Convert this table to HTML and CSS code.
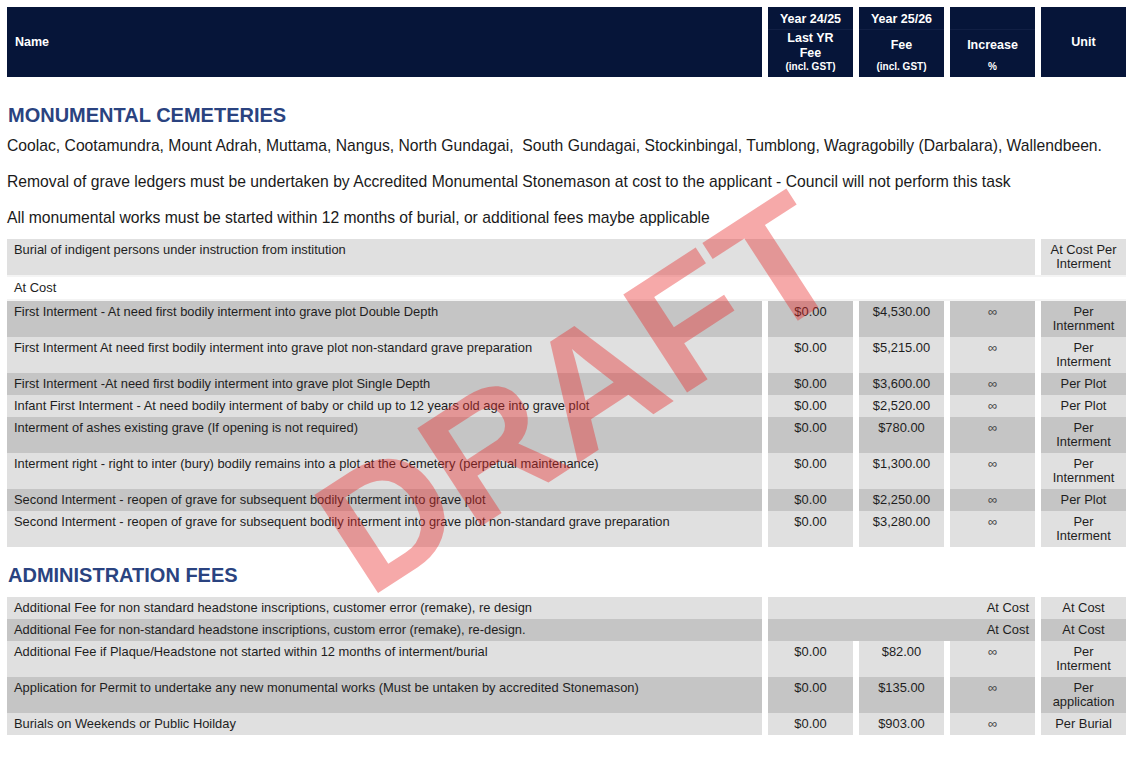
FILE: index.html
```html
<!DOCTYPE html>
<html>
<head>
<meta charset="utf-8">
<link rel="stylesheet" href="styles.css">
</head>
<body>
<div class="page">
  <table class="fees head">
    <colgroup><col class="c-name"><col class="c-num"><col class="c-num"><col class="c-num"><col class="c-num"></colgroup>
    <tr class="h-top">
      <th rowspan="2" class="h-name">Name</th>
      <th class="h-year">Year 24/25</th>
      <th class="h-year">Year 25/26</th>
      <th class="h-year"></th>
      <th rowspan="2" class="h-unit">Unit</th>
    </tr>
    <tr class="h-bot">
      <th><div class="h-cell"><div class="h-label">Last YR<br>Fee</div><div class="h-small">(incl. GST)</div></div></th>
      <th><div class="h-cell"><div class="h-label">Fee</div><div class="h-small">(incl. GST)</div></div></th>
      <th><div class="h-cell"><div class="h-label">Increase</div><div class="h-small">%</div></div></th>
    </tr>
  </table>

  <h2 class="section first">MONUMENTAL CEMETERIES</h2>
  <div class="notes">
    <p>Coolac, Cootamundra, Mount Adrah, Muttama, Nangus, North Gundagai, &nbsp;South Gundagai, Stockinbingal, Tumblong, Wagragobilly (Darbalara), Wallendbeen.</p>
    <p>Removal of grave ledgers must be undertaken by Accredited Monumental Stonemason at cost to the applicant - Council will not perform this task</p>
    <p>All monumental works must be started within 12 months of burial, or additional fees maybe applicable</p>
  </div>

  <table class="fees body">
    <colgroup><col class="c-name"><col class="c-num"><col class="c-num"><col class="c-num"><col class="c-num"></colgroup>
    <tr class="lt"><td colspan="4" class="name">Burial of indigent persons under instruction from institution</td><td class="unit">At Cost Per Interment</td></tr>
    <tr class="plain"><td colspan="5" class="name">At Cost</td></tr>
    <tr class="dk"><td class="name">First Interment - At need first bodily interment into grave plot Double Depth</td><td>$0.00</td><td>$4,530.00</td><td class="inf">∞</td><td class="unit">Per Internment</td></tr>
    <tr class="lt"><td class="name">First Interment At need first bodily interment into grave plot non-standard grave preparation</td><td>$0.00</td><td>$5,215.00</td><td class="inf">∞</td><td class="unit">Per Interment</td></tr>
    <tr class="dk"><td class="name">First Interment -At need first bodily interment into grave plot Single Depth</td><td>$0.00</td><td>$3,600.00</td><td class="inf">∞</td><td class="unit">Per Plot</td></tr>
    <tr class="lt"><td class="name">Infant First Interment - At need bodily interment of baby or child up to 12 years old age into grave plot</td><td>$0.00</td><td>$2,520.00</td><td class="inf">∞</td><td class="unit">Per Plot</td></tr>
    <tr class="dk"><td class="name">Interment of ashes existing grave (If opening is not required)</td><td>$0.00</td><td>$780.00</td><td class="inf">∞</td><td class="unit">Per Interment</td></tr>
    <tr class="lt"><td class="name">Interment right - right to inter (bury) bodily remains into a plot at the Cemetery (perpetual maintenance)</td><td>$0.00</td><td>$1,300.00</td><td class="inf">∞</td><td class="unit">Per Internment</td></tr>
    <tr class="dk"><td class="name">Second Interment - reopen of grave for subsequent bodily interment into grave plot</td><td>$0.00</td><td>$2,250.00</td><td class="inf">∞</td><td class="unit">Per Plot</td></tr>
    <tr class="lt"><td class="name">Second Interment - reopen of grave for subsequent bodily interment into grave plot non-standard grave preparation</td><td>$0.00</td><td>$3,280.00</td><td class="inf">∞</td><td class="unit">Per Interment</td></tr>
  </table>

  <h2 class="section">ADMINISTRATION FEES</h2>

  <table class="fees body">
    <colgroup><col class="c-name"><col class="c-num"><col class="c-num"><col class="c-num"><col class="c-num"></colgroup>
    <tr class="lt"><td class="name">Additional Fee for non standard headstone inscriptions, customer error (remake), re design</td><td colspan="3" class="right">At Cost</td><td class="unit">At Cost</td></tr>
    <tr class="dk"><td class="name">Additional Fee for non-standard headstone inscriptions, custom error (remake), re-design.</td><td colspan="3" class="right">At Cost</td><td class="unit">At Cost</td></tr>
    <tr class="lt"><td class="name">Additional Fee if Plaque/Headstone not started within 12 months of interment/burial</td><td>$0.00</td><td>$82.00</td><td class="inf">∞</td><td class="unit">Per Interment</td></tr>
    <tr class="dk"><td class="name">Application for Permit to undertake any new monumental works (Must be untaken by accredited Stonemason)</td><td>$0.00</td><td>$135.00</td><td class="inf">∞</td><td class="unit">Per application</td></tr>
    <tr class="lt"><td class="name">Burials on Weekends or Public Hoilday</td><td>$0.00</td><td>$903.00</td><td class="inf">∞</td><td class="unit">Per Burial</td></tr>
  </table>

  <div class="watermark">DRAFT</div>
</div>
</body>
</html>
```

FILE: styles.css
```css
* { box-sizing: border-box; }
html, body { margin: 0; padding: 0; background: #fff; }
body {
  font-family: "Liberation Sans", Arial, sans-serif;
  color: #1c1c1c;
}
.page {
  position: relative;
  padding: 7px 8px 0 7px;
  width: 1134px;
  height: 782px;
  overflow: hidden;
}
.fees {
  table-layout: fixed;
  border-collapse: separate;
  border-spacing: 6px 0;
  margin: 0 -6px;
  width: calc(100% + 12px);
}
.c-num { width: 85px; }

/* header */
.head th {
  background: #061539;
  color: #fff;
  font-weight: bold;
  font-size: 12.5px;
  padding: 0;
}
.h-top th { height: 22px; }
.h-bot th { height: 48px; border-top: 1px solid #111f44; }
.h-top .h-year { vertical-align: middle; line-height: 14px; padding-top: 1px; }
.h-name { text-align: left; padding-left: 8px !important; vertical-align: middle; }
.h-unit { text-align: center; vertical-align: middle; }
.h-cell {
  height: 47px;
  display: flex;
  flex-direction: column;
  align-items: center;
}
.h-label {
  flex: 1;
  display: flex;
  align-items: center;
  justify-content: center;
  line-height: 15px;
}
.h-small {
  font-size: 10px;
  line-height: 12px;
  padding-bottom: 4px;
}

/* sections */
.section {
  margin: 26px 0 10px 1px;
  font-size: 20px;
  line-height: 24px;
  font-weight: bold;
  color: #2a4380;
}
.notes {
  display: flex;
  flex-direction: column;
  gap: 18px;
  margin-bottom: 12px;
}
.notes p {
  margin: 0;
  font-size: 15.7px;
  line-height: 18px;
  color: #1a1a1a;
}

/* body table */
.body td {
  font-size: 12.9px;
  line-height: 14px;
  padding: 4px 4px;
  vertical-align: top;
  text-align: center;
  color: #1e1e1e;
}
.body td.name { text-align: left; padding-left: 7px; }
.body td.right { text-align: right; padding-right: 6px; }
.body td.inf { color: #444; }
.lt td { background: #e0e0e0; }
.dk td { background: #c5c5c5; }
.plain td {
  background: #fff;
  border-top: 2px solid #f4f4f4;
  border-bottom: 2px solid #f4f4f4;
  padding-top: 4px;
  padding-bottom: 4px;
}
.body + .section { margin-top: 16px; }

.watermark {
  position: absolute;
  left: 578px;
  top: 393px;
  transform: translate(-50%, -50%) rotate(-33deg);
  font-size: 170px;
  line-height: 1;
  font-weight: bold;
  color: rgba(232, 40, 40, 0.4);
  white-space: nowrap;
  pointer-events: none;
}
```
